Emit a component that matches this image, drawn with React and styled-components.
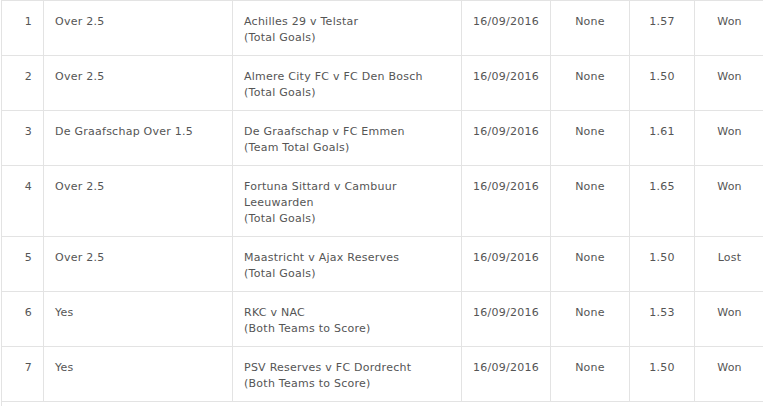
import React from 'react';
import styled, { createGlobalStyle } from 'styled-components';

const GlobalStyle = createGlobalStyle`
  html, body {
    margin: 0;
    padding: 0;
    background: #fff;
    overflow: hidden;
  }
`;

const bets = [
  { pick: 'Over 2.5', match: ['Achilles 29 v Telstar'], market: 'Total Goals', odds: '1.57', result: 'Won' },
  { pick: 'Over 2.5', match: ['Almere City FC v FC Den Bosch'], market: 'Total Goals', odds: '1.50', result: 'Won' },
  { pick: 'De Graafschap Over 1.5', match: ['De Graafschap v FC Emmen'], market: 'Team Total Goals', odds: '1.61', result: 'Won' },
  { pick: 'Over 2.5', match: ['Fortuna Sittard v Cambuur', 'Leeuwarden'], market: 'Total Goals', odds: '1.65', result: 'Won' },
  { pick: 'Over 2.5', match: ['Maastricht v Ajax Reserves'], market: 'Total Goals', odds: '1.50', result: 'Lost' },
  { pick: 'Yes', match: ['RKC v NAC'], market: 'Both Teams to Score', odds: '1.53', result: 'Won' },
  { pick: 'Yes', match: ['PSV Reserves v FC Dordrecht'], market: 'Both Teams to Score', odds: '1.50', result: 'Won' },
];

const widths = [42, 189, 229, 89, 79, 65, 70];

function App() {
  return (
    <>
      <GlobalStyle />
      <Wrap>
        <Table>
          <colgroup>
            {widths.map((w, i) => (
              <Col key={i} $w={w} />
            ))}
          </colgroup>
          <tbody>
            {bets.map((b, i) => (
              <tr key={i}>
                <Cell $align="right">{i + 1}</Cell>
                <Cell>{b.pick}</Cell>
                <Cell>
                  {b.match.map((m) => (
                    <Line key={m}>{m}</Line>
                  ))}
                  <Line>({b.market})</Line>
                </Cell>
                <Cell>16/09/2016</Cell>
                <Cell $align="center">None</Cell>
                <Cell $align="center">{b.odds}</Cell>
                <Cell $align="center">{b.result}</Cell>
              </tr>
            ))}
            <tr>
              <Cell colSpan={7} />
            </tr>
          </tbody>
        </Table>
      </Wrap>
    </>
  );
}

const Wrap = styled.div`
  padding-left: 1px;
  width: 780px;
`;

const Table = styled.table`
  border-collapse: collapse;
  table-layout: fixed;
  width: 764px;
  font-family: 'DejaVu Sans', Verdana, sans-serif;
  font-size: 11px;
  letter-spacing: 0.25px;
  line-height: 16px;
  color: #555;
`;

const Col = styled.col`
  width: ${(p) => p.$w}px;
`;

const Cell = styled.td`
  border: 1px solid #e3e3e3;
  padding: 13px 11px 9px;
  vertical-align: top;
  text-align: ${(p) => p.$align || 'left'};
  white-space: nowrap;
`;

const Line = styled.div``;

export default App;
